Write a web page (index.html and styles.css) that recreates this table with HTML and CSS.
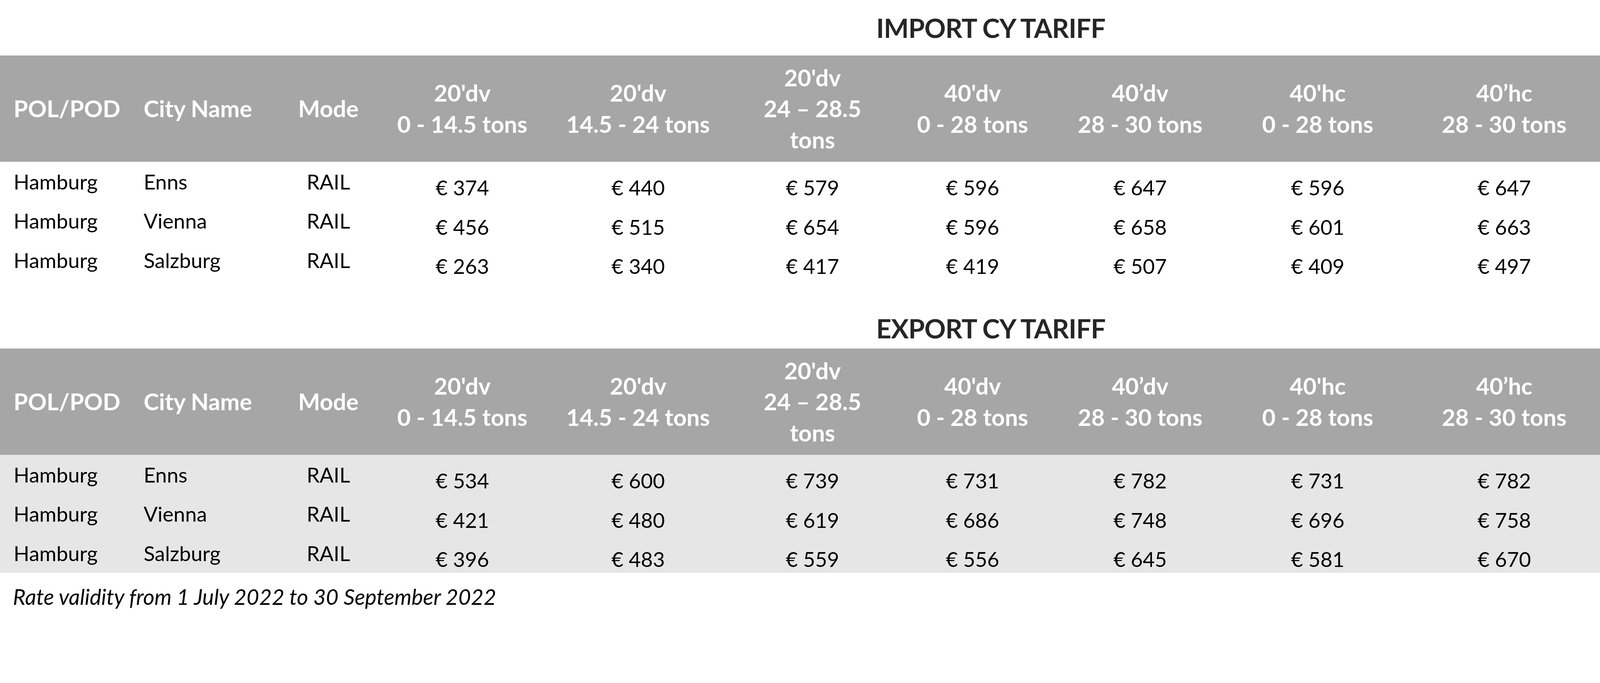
FILE: index.html
```html
<!DOCTYPE html>
<html lang="en">
<head>
<meta charset="utf-8">
<title>CY Tariff</title>
<link rel="stylesheet" href="styles.css">
</head>
<body>
<main class="page">
  <section class="tariff tariff--import">
    <div class="tariff-grid tariff-caption">
      <h2 class="tariff-title">IMPORT CY TARIFF</h2>
    </div>
    <div class="tariff-grid tariff-head">
      <div class="th th--left">POL/POD</div>
      <div class="th th--left">City Name</div>
      <div class="th">Mode</div>
      <div class="th">20'dv<br>0 - 14.5 tons</div>
      <div class="th">20'dv<br>14.5 - 24 tons</div>
      <div class="th">20'dv<br>24 – 28.5<br>tons</div>
      <div class="th">40'dv<br>0 - 28 tons</div>
      <div class="th">40’dv<br>28 - 30 tons</div>
      <div class="th">40'hc<br>0 - 28 tons</div>
      <div class="th">40’hc<br>28 - 30 tons</div>
    </div>
    <div class="tariff-body">
      <div class="tariff-grid tariff-row">
        <div class="td td--left">Hamburg</div>
        <div class="td td--left">Enns</div>
        <div class="td td--mode">RAIL</div>
        <div class="td td--val">€ 374</div>
        <div class="td td--val">€ 440</div>
        <div class="td td--val">€ 579</div>
        <div class="td td--val">€ 596</div>
        <div class="td td--val">€ 647</div>
        <div class="td td--val">€ 596</div>
        <div class="td td--val">€ 647</div>
      </div>
      <div class="tariff-grid tariff-row">
        <div class="td td--left">Hamburg</div>
        <div class="td td--left">Vienna</div>
        <div class="td td--mode">RAIL</div>
        <div class="td td--val">€ 456</div>
        <div class="td td--val">€ 515</div>
        <div class="td td--val">€ 654</div>
        <div class="td td--val">€ 596</div>
        <div class="td td--val">€ 658</div>
        <div class="td td--val">€ 601</div>
        <div class="td td--val">€ 663</div>
      </div>
      <div class="tariff-grid tariff-row">
        <div class="td td--left">Hamburg</div>
        <div class="td td--left">Salzburg</div>
        <div class="td td--mode">RAIL</div>
        <div class="td td--val">€ 263</div>
        <div class="td td--val">€ 340</div>
        <div class="td td--val">€ 417</div>
        <div class="td td--val">€ 419</div>
        <div class="td td--val">€ 507</div>
        <div class="td td--val">€ 409</div>
        <div class="td td--val">€ 497</div>
      </div>
    </div>
  </section>

  <section class="tariff tariff--export">
    <div class="tariff-grid tariff-caption">
      <h2 class="tariff-title">EXPORT CY TARIFF</h2>
    </div>
    <div class="tariff-grid tariff-head">
      <div class="th th--left">POL/POD</div>
      <div class="th th--left">City Name</div>
      <div class="th">Mode</div>
      <div class="th">20'dv<br>0 - 14.5 tons</div>
      <div class="th">20'dv<br>14.5 - 24 tons</div>
      <div class="th">20'dv<br>24 – 28.5<br>tons</div>
      <div class="th">40'dv<br>0 - 28 tons</div>
      <div class="th">40’dv<br>28 - 30 tons</div>
      <div class="th">40'hc<br>0 - 28 tons</div>
      <div class="th">40’hc<br>28 - 30 tons</div>
    </div>
    <div class="tariff-body tariff-body--shaded">
      <div class="tariff-grid tariff-row">
        <div class="td td--left">Hamburg</div>
        <div class="td td--left">Enns</div>
        <div class="td td--mode">RAIL</div>
        <div class="td td--val">€ 534</div>
        <div class="td td--val">€ 600</div>
        <div class="td td--val">€ 739</div>
        <div class="td td--val">€ 731</div>
        <div class="td td--val">€ 782</div>
        <div class="td td--val">€ 731</div>
        <div class="td td--val">€ 782</div>
      </div>
      <div class="tariff-grid tariff-row">
        <div class="td td--left">Hamburg</div>
        <div class="td td--left">Vienna</div>
        <div class="td td--mode">RAIL</div>
        <div class="td td--val">€ 421</div>
        <div class="td td--val">€ 480</div>
        <div class="td td--val">€ 619</div>
        <div class="td td--val">€ 686</div>
        <div class="td td--val">€ 748</div>
        <div class="td td--val">€ 696</div>
        <div class="td td--val">€ 758</div>
      </div>
      <div class="tariff-grid tariff-row">
        <div class="td td--left">Hamburg</div>
        <div class="td td--left">Salzburg</div>
        <div class="td td--mode">RAIL</div>
        <div class="td td--val">€ 396</div>
        <div class="td td--val">€ 483</div>
        <div class="td td--val">€ 559</div>
        <div class="td td--val">€ 556</div>
        <div class="td td--val">€ 645</div>
        <div class="td td--val">€ 581</div>
        <div class="td td--val">€ 670</div>
      </div>
    </div>
  </section>

  <p class="note">Rate validity from 1 July 2022 to 30 September 2022</p>
</main>
</body>
</html>
```

FILE: styles.css
```css
/* One design unit = one pixel of a 4478px-wide frame */
:root {
  --u: calc(100vw / 4478);
}

* {
  box-sizing: border-box;
}

html,
body {
  margin: 0;
  padding: 0;
  background: #ffffff;
  overflow: hidden;
}

body {
  font-family: "Lato", "Carlito", "Liberation Sans", sans-serif;
  color: #000000;
}

.page {
  display: flex;
  flex-direction: column;
  width: 100%;
}

.tariff-grid {
  display: grid;
  grid-template-columns: 364fr 406fr 298fr 452fr 532fr 444fr 452fr 486fr 508fr 536fr;
  width: 100%;
}

/* Section title */
.tariff-caption {
  height: calc(155 * var(--u));
  padding-top: calc(33 * var(--u));
}

.tariff--export .tariff-caption {
  height: calc(192 * var(--u));
  padding-top: calc(91 * var(--u));
}

.tariff-title {
  grid-column: 4 / 11;
  margin: 0;
  text-align: center;
  font-size: calc(74 * var(--u));
  line-height: calc(89 * var(--u));
  font-weight: 700;
  color: #262626;
  letter-spacing: calc(-1 * var(--u));
}

/* Header band */
.tariff-head {
  height: calc(298 * var(--u));
  background: #a6a6a6;
}

.th {
  display: flex;
  align-items: center;
  justify-content: center;
  text-align: center;
  color: #ffffff;
  font-weight: 700;
  font-size: calc(65 * var(--u));
  line-height: calc(87 * var(--u));
}

.th--left {
  justify-content: flex-start;
  text-align: left;
  padding-left: calc(38 * var(--u));
}

/* Body rows */
.tariff-body--shaded {
  background: #e6e6e6;
}

.tariff-row {
  height: calc(110 * var(--u));
}

.td {
  font-size: calc(58 * var(--u));
  line-height: calc(68 * var(--u));
  padding-top: calc(21 * var(--u));
  white-space: nowrap;
}

.td--left {
  padding-left: calc(38 * var(--u));
}

.td--mode {
  text-align: center;
}

.td--val {
  text-align: center;
  padding-top: calc(38 * var(--u));
}

/* Footnote */
.note {
  margin: calc(32 * var(--u)) 0 0;
  padding-left: calc(36 * var(--u));
  font-size: calc(61 * var(--u));
  line-height: calc(70 * var(--u));
  font-style: italic;
}
```
